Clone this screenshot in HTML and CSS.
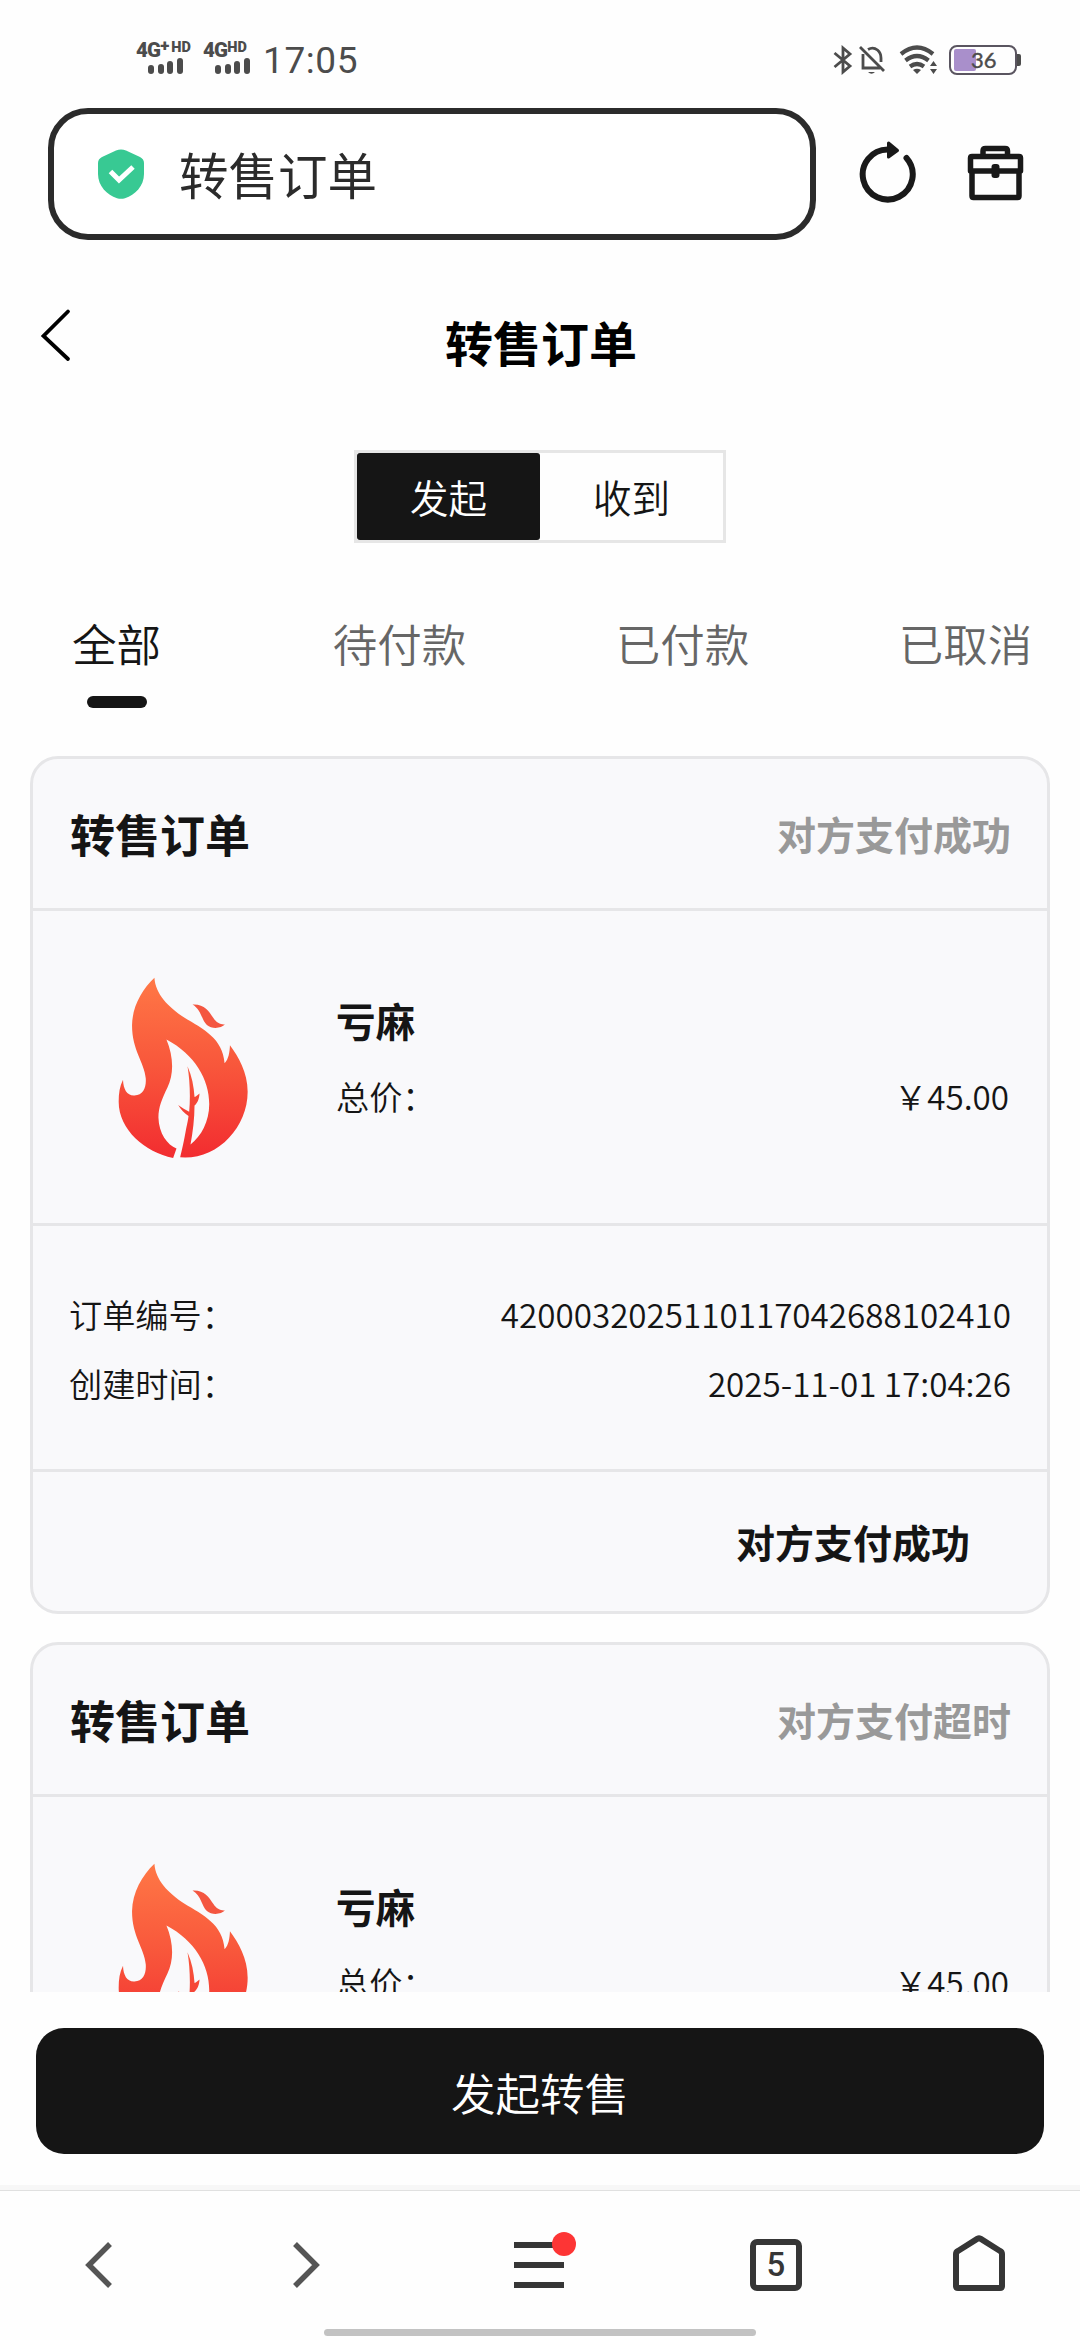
FILE: index.html
```html
<!DOCTYPE html>
<html lang="zh-CN">
<head>
<meta charset="utf-8">
<title>转售订单</title>
<link rel="stylesheet" href="styles.css">
</head>
<body>
<svg class="defs" width="0" height="0" aria-hidden="true">
  <defs>
    <linearGradient id="fire" x1="0" y1="82" x2="0" y2="624" gradientUnits="userSpaceOnUse">
      <stop offset="0" stop-color="#ff7846"/>
      <stop offset="0.5" stop-color="#f8563b"/>
      <stop offset="1" stop-color="#f22c30"/>
    </linearGradient>
    <symbol id="flame" viewBox="84 82 392 544">
      <path fill="url(#fire)" d="M193 84C196 133 234 171 282 203C340 238 397 265 403 340C415 327 418 308 419 286C444 320 472 367 472 425C472 530 386 622 285 622L270 621C275 600 282 570 288 535C292 518 294 507 295 498C283 490 272 478 264 465C276 474 286 480 297 485C301 440 299 390 292 349C305 378 311 410 313 441C318 439 323 434 328 430C327 447 321 460 313 466C313 505 308 545 301 583C333 558 357 515 357 462C357 389 314 314 229 269C250 320 252 372 232 412C216 446 205 470 205 502C206 550 232 584 259 595L249 623C165 607 86 538 86 455C86 430 89 408 99 389C100 418 111 437 133 436C160 435 169 411 167 385C163 337 126 302 126 226C127 169 156 119 193 84Z"/>
      <path fill="#f45640" d="M307 164C342 162 356 184 369 204C379 219 390 225 404 224C393 235 366 239 350 225C334 211 334 180 307 164Z"/>
    </symbol>
  </defs>
</svg>
<div class="screen">
  <header class="status">
    <div class="status-left">
      <div class="sim sim-a">
        <div class="net">4G<span class="plus">+</span><span class="hd">HD</span></div>
        <div class="bars"><i class="b1"></i><i class="b2"></i><i class="b3"></i><i class="b4"></i></div>
      </div>
      <div class="sim sim-b">
        <div class="net">4G<span class="hd">HD</span></div>
        <div class="bars"><i class="b1"></i><i class="b2"></i><i class="b3"></i><i class="b4"></i></div>
      </div>
      <div class="clock">17:05</div>
    </div>
    <div class="status-right">
      <svg width="20" height="30" viewBox="0 0 20 30" fill="none" stroke="#4c4c4c" stroke-width="2.8" stroke-linejoin="miter"><path d="M1.5 8L17 21L10 27V3L17 9L1.5 22"/></svg>
      <svg class="bell" width="27" height="30" viewBox="0 0 27 30" fill="none" stroke="#4c4c4c" stroke-width="2.8"><path d="M4 9V23H21M9 4.5Q14 1.5 18.5 5Q22 8 22 13V17M1 2L25 26"/><path d="M9 27H16Q12.500 30.500 9 27Z" fill="#4c4c4c" stroke="none"/></svg>
      <svg class="wifi" width="40" height="30" viewBox="0 0 40 30" fill="none" stroke="#4c4c4c" stroke-width="4.200"><path d="M2 9Q18 -4 34 9M6.500 15.500Q18 6.500 29.500 15.500M11 21.500Q18 16.500 25 21.500" /><path d="M14 25Q18 22.500 22 25L18 29Z M31 21L34.500 16L38 21ZM31 24H38L34.500 29Z" fill="#4c4c4c" stroke="none"/></svg>
      <div class="battery"><div class="cell"><div class="charge"></div><span class="pct">36</span></div><div class="nub"></div></div>
    </div>
  </header>

  <div class="browser">
    <div class="address">
      <svg width="46" height="50" viewBox="0 0 46 50"><path fill="#38c993" d="M18 1.500Q23-.5 28 1.500L42 8Q46 10 46 14V25C46 37 37 46 27 49.200Q23 50.500 19 49.200C9 46 0 37 0 25V14Q0 10 4 8Z"/><path d="M12.500 22.500L21 31L35 18" fill="none" stroke="#fff" stroke-width="5"/></svg>
      <span>转售订单</span>
    </div>
    <svg class="reload" width="58" height="64" viewBox="0 0 58 64"><path d="M29 10.500A25 25 0 1 0 47.500 19" fill="none" stroke="#191919" stroke-width="6" stroke-linecap="round"/><path d="M29.500 4L38.500 11.500L29.500 18Z" fill="#191919" stroke="#191919" stroke-width="3" stroke-linejoin="round"/></svg>
    <svg class="toolbox" width="58" height="56" viewBox="0 0 58 56" fill="none" stroke="#191919" stroke-width="5.500" stroke-linejoin="round"><path d="M16 11V6Q16 3.500 18.500 3.500H38Q40.500 3.500 40.500 6V11M3.500 26V13Q3.500 11.500 5 11.500H52Q53.500 11.500 53.500 13V26ZM5 26V51Q5 52.500 6.500 52.500H50.500Q52 52.500 52 51V26"/><rect x="24.500" y="19" width="8" height="14" rx="3" fill="#191919" stroke="none"/></svg>
  </div>

  <div class="titlebar">
    <svg class="back" width="32" height="54" viewBox="0 0 32 54"><path d="M28 3.500L3.500 28L28 51" fill="none" stroke="#000" stroke-width="3.800" stroke-linecap="round"/></svg>
    <h1>转售订单</h1>
  </div>

  <div class="segment">
    <div class="seg active">发起</div>
    <div class="seg">收到</div>
  </div>

  <nav class="tabs">
    <div class="tab current">全部</div>
    <div class="tab">待付款</div>
    <div class="tab">已付款</div>
    <div class="tab">已取消</div>
  </nav>

  <main class="list">
    <section class="card">
      <div class="card-head"><h2>转售订单</h2><span class="state">对方支付成功</span></div>
      <div class="item">
        <svg class="thumb"><use href="#flame"/></svg>
        <div class="info">
          <div class="name">亏麻</div>
          <div class="row price"><span>总价：</span><span>￥45.00</span></div>
        </div>
      </div>
      <div class="meta">
        <div class="row"><span>订单编号：</span><span>4200032025110117042688102410</span></div>
        <div class="row"><span>创建时间：</span><span>2025-11-01 17:04:26</span></div>
      </div>
      <div class="card-foot">对方支付成功</div>
    </section>
    <section class="card">
      <div class="card-head"><h2>转售订单</h2><span class="state">对方支付超时</span></div>
      <div class="item">
        <svg class="thumb"><use href="#flame"/></svg>
        <div class="info">
          <div class="name">亏麻</div>
          <div class="row price"><span>总价：</span><span>￥45.00</span></div>
        </div>
      </div>
    </section>
  </main>

  <div class="action"><div class="button">发起转售</div></div>

  <footer class="toolbar">
    <div class="tools">
      <svg width="28" height="48" viewBox="0 0 28 48"><path d="M25 3L4 24L25 45" fill="none" stroke="#555" stroke-width="5.500"/></svg>
      <svg width="28" height="48" viewBox="0 0 28 48"><path d="M3 3L24 24L3 45" fill="none" stroke="#555" stroke-width="5.500"/></svg>
      <svg class="menu" width="62" height="58" viewBox="0 0 62 58"><path d="M0 14H50M0 34H50M0 54H50" stroke="#363636" stroke-width="6"/><circle cx="50" cy="13" r="12" fill="#fd3535"/></svg>
      <div class="count">5</div>
      <svg class="home" width="52" height="58" viewBox="0 0 52 58"><path d="M3 20Q3 18 5 17L24.500 4.700Q26 4 27.500 4.700L47 17Q49 18 49 20V52Q49 54 47 54H5Q3 54 3 52Z" fill="none" stroke="#363636" stroke-width="6"/></svg>
    </div>
    <div class="handle"></div>
  </footer>
</div>
</body>
</html>
```

FILE: styles.css
```css
* { box-sizing: border-box; }

body {
  margin: 0;
  background: #fefefe;
  color: #151515;
  font-family: "Noto Sans CJK SC", sans-serif;
}

svg { display: block; flex: none; }
.defs { position: absolute; }
h1, h2 { margin: 0; }

.screen {
  width: 1080px;
  height: 2340px;
  display: flex;
  flex-direction: column;
  overflow: hidden;
}

/* System status bar */
.status {
  flex: none;
  height: 108px;
  padding: 40px 59px 0 136px;
  display: flex;
  justify-content: space-between;
  color: #4c4c4c;
  font-family: Roboto, sans-serif;
}
.status-left, .status-right { display: flex; align-items: flex-start; }
.sim-a { width: 67px; }
.sim-b { width: 60px; }
.net {
  height: 18px;
  display: flex;
  font-size: 20.5px;
  font-weight: 900;
  line-height: 20px;
  white-space: nowrap;
  letter-spacing: -0.8px;
}
.net .plus { font-size: 17px; line-height: 11px; letter-spacing: 0; }
.net .hd { font-size: 14.5px; line-height: 15px; letter-spacing: 0; }
.sim-a .hd { margin-left: 2px; }
.bars { display: flex; align-items: flex-end; gap: 3.5px; height: 16px; padding-left: 12px; }
.bars i { width: 6px; border-radius: 3px; background: #4c4c4c; }
.b1 { height: 9px; }
.b2 { height: 10px; }
.b3 { height: 13px; }
.b4 { height: 16px; }
.clock { font-size: 37px; line-height: 42px; letter-spacing: 0.6px; }
.status-right { padding-top: 5px; }
.bell { margin-left: 6px; }
.wifi { margin-left: 13px; }
.battery { display: flex; align-items: center; margin-left: 10px; }
.cell {
  width: 68px;
  height: 30px;
  padding: 3px;
  border: 2px solid #5a5560;
  border-radius: 8px;
  display: flex;
  align-items: center;
}
.charge { width: 22px; height: 22px; border-radius: 2px; background: #a98fcb; }
.pct { margin-left: -5px; font: 22px/22px Lato, sans-serif; -webkit-text-stroke: 0.4px #4c4c4c; }
.nub { width: 4px; height: 12px; background: #4c4c4c; border-radius: 0 2px 2px 0; }

/* Browser address row */
.browser { flex: none; display: flex; height: 132px; padding-left: 48px; }
.address {
  width: 768px;
  height: 132px;
  padding-left: 44px;
  border: 6px solid #2b2b2b;
  border-radius: 40px;
  background: #fff;
  display: flex;
  align-items: center;
  gap: 35px;
  color: #2b2b2b;
  font-size: 49.5px;
  line-height: 60px;
}
.address span { margin-top: -1px; }
.reload { margin: 31px 0 0 43px; }
.toolbox { margin: 37px 0 0 50px; }

/* Page title */
.titlebar {
  flex: none;
  height: 210px;
  padding: 68px 40px 0;
  display: grid;
  grid-template-columns: 100px 1fr 100px;
}
.titlebar h1 { font-size: 48px; line-height: 66px; text-align: center; color: #000; margin-left: 2px; }

.segment {
  flex: none;
  align-self: center;
  width: 372px;
  height: 93px;
  border: 3px solid #e6e6e6;
  display: flex;
}
.seg { flex: 1; font-size: 38.5px; font-weight: 350; line-height: 87px; text-align: center; }
.seg.active { background: #151515; color: #fff; border-radius: 3px; }

/* Order state tabs; the strip runs past both edges */
.tabs {
  flex: none;
  height: 213px;
  margin-left: -25px;
  padding-top: 69px;
  display: flex;
}
.tab {
  flex: none;
  width: 283px;
  font-size: 44.5px;
  font-weight: 350;
  line-height: 62px;
  text-align: center;
  color: #666;
}
.tab.current { color: #151515; }
.tab.current::after {
  content: "";
  display: block;
  width: 60px;
  height: 12px;
  margin: 22px auto 0;
  border-radius: 6px;
  background: #151515;
}

/* Orders */
.list {
  flex: none;
  height: 1236px;
  padding: 0 30px;
  display: flex;
  flex-direction: column;
  gap: 28px;
  overflow: hidden;
}
.card {
  flex: none;
  border: 3px solid #e6e6e8;
  border-radius: 28px;
  background: #f9f9fb;
}
.card-head {
  height: 152px;
  padding: 0 36px 0 37px;
  display: flex;
  align-items: center;
  justify-content: space-between;
  border-bottom: 3px solid #e6e6e8;
}
.card-head h2 { font-size: 45px; line-height: 60px; }
.state { padding-bottom: 2px; font-size: 39px; font-weight: 700; color: #999; }
.item {
  height: 315px;
  padding: 66px 38px 0 85px;
  display: flex;
  border-bottom: 3px solid #e6e6e8;
}
.thumb { width: 131px; height: 182px; }
.info { flex: 1; margin-left: 87px; padding-top: 14px; }
.name { font-size: 39.5px; font-weight: 700; line-height: 58px; }
.row { display: flex; justify-content: space-between; font-size: 33.2px; line-height: 69px; font-weight: 350; }
.price { margin-top: 12px; }
.meta { height: 246px; padding: 53px 36px 0; border-bottom: 3px solid #e6e6e8; }
.card-foot {
  height: 139px;
  padding-right: 77px;
  font-size: 39px;
  font-weight: 700;
  line-height: 138px;
  text-align: right;
}

/* Primary action */
.action { flex: none; height: 193px; padding: 36px 36px 0; }
.button {
  height: 126px;
  border-radius: 28px;
  background: #151515;
  color: #fff;
  font-size: 44.5px;
  font-weight: 350;
  line-height: 128px;
  text-align: center;
}

/* Browser toolbar */
.toolbar {
  flex: none;
  height: 155px;
  border-top: 5px solid #f7f7f7;
}
.tools {
  height: 140px;
  padding: 50px 75px 0 85px;
  border-top: 1px solid #e0e0e0;
  background: #fefefe;
  display: flex;
  align-items: flex-start;
}
.tools > :nth-child(2) { margin-left: 179px; }
.menu { margin: -10px 0 0 194px; }
.count {
  width: 52px;
  height: 52px;
  margin: -2px 0 0 174px;
  border: 6px solid #363636;
  border-radius: 7px;
  color: #363636;
  font: 500 33px/40px Roboto, sans-serif;
  text-align: center;
}
.home { margin: -7px 0 0 151px; }
.handle { width: 432px; height: 7px; margin: -1px auto 0; border-radius: 4px; background: #c2c2c2; }
```
